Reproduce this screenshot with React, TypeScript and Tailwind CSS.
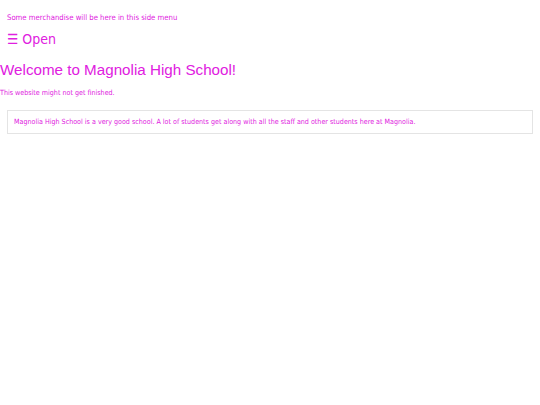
const font = "font-['DejaVu_Sans_Condensed','DejaVu_Sans',sans-serif] font-stretch-condensed";

export default function App() {
  return (
    <div className="min-h-[405px] bg-white text-[#e020e0]">
      <div className="px-[7px] pt-[13px]">
        <p className={font + " text-[7.7px] leading-[10px]"}>Some merchandise will be here in this side menu</p>
        <button className={font + " mt-[7px] text-[14px] leading-[18px]"}>☰ Open</button>
      </div>
      <h1 className="mt-[10px] font-['Liberation_Sans',Arial,sans-serif] text-[15.2px] leading-[20px]">
        Welcome to Magnolia High School!
      </h1>
      <p className={font + " mt-[8px] text-[7.1px] leading-[10px]"}>This website might not get finished.</p>
      <div className="mx-[7px] mt-[12px] border border-[#e4e4e4] px-[6px] py-[6px]">
        <p className={font + " text-[7.1px] leading-[10px]"}>
          Magnolia High School is a very good school. A lot of students get along with all the staff and other students here at Magnolia.
        </p>
      </div>
    </div>
  );
}
